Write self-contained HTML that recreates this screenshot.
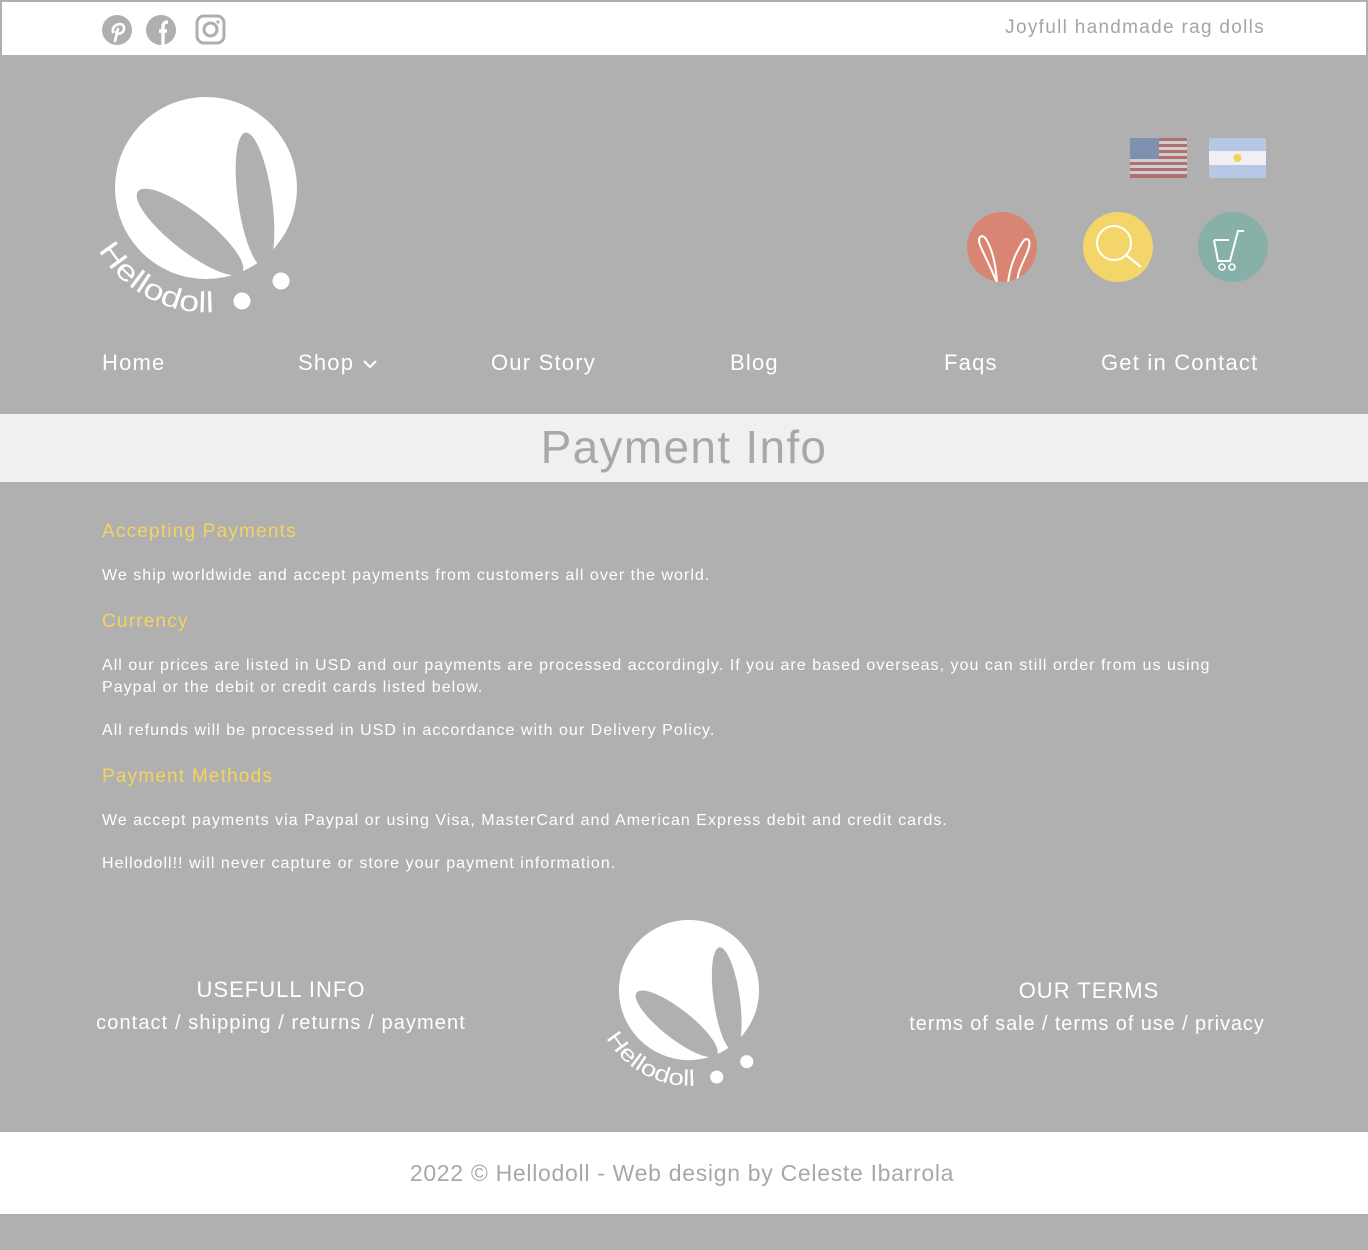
<!DOCTYPE html>
<html><head><meta charset="utf-8">
<style>
*{margin:0;padding:0;box-sizing:border-box}
body{width:1368px;height:1250px;background:#b0b0b0;font-family:"Liberation Sans",sans-serif;position:relative;overflow:hidden}
.a{position:absolute;white-space:nowrap}
.top{left:0;top:0;width:1368px;height:55px;background:#fff;border:2px solid #b0b0b0;border-bottom:none}
.nav{color:#fff;font-size:22px;top:350px;letter-spacing:1.2px}
.band{left:0;top:414px;width:1368px;height:68px;background:#f0f0f0}
.h{color:#f4d35e;font-size:19px;left:102px;letter-spacing:1.2px}
.p{color:#fff;font-size:16px;left:102px;line-height:22px;letter-spacing:1.03px}
.foot{left:0;top:1132px;width:1368px;height:82px;background:#fff}
</style></head><body>
<div class="a top"></div>
<svg class="a" style="left:100px;top:13px" width="130" height="34" viewBox="0 0 130 34">
 <circle cx="17" cy="17" r="15" fill="#afafaf"/>
 <path d="M15 28 L18 16 M13 19 C11 11 24 8 24 15 C24 21 17 22 16 19" stroke="#fff" stroke-width="2.6" fill="none" stroke-linecap="round"/>
 <circle cx="61" cy="17" r="15" fill="#afafaf"/>
 <path d="M63 32 V18 H67 M59 18 H67 M63 32 V14 C63 10 65 9 68 9" stroke="#fff" stroke-width="3.4" fill="none"/>
 <rect x="97" y="3" width="27" height="27" rx="7" fill="none" stroke="#afafaf" stroke-width="3"/>
 <circle cx="110.5" cy="16.5" r="6.5" fill="none" stroke="#afafaf" stroke-width="3"/>
 <circle cx="118" cy="9" r="1.6" fill="#afafaf"/>
</svg>
<div class="a" style="right:103px;top:17px;font-size:19px;color:#a5a5a5;letter-spacing:1.3px">Joyfull handmade rag dolls</div>

<svg width="0" height="0" style="position:absolute">
 <defs>
  <g id="logo">
   <circle cx="0" cy="0" r="91" fill="#fff"/>
   <ellipse cx="49" cy="12" rx="17" ry="68" transform="rotate(-8 49 12)" fill="#b0b0b0"/>
   <ellipse cx="-16" cy="44" rx="66" ry="19" transform="rotate(38 -16 44)" fill="#b0b0b0"/>
   <path id="arc" d="M -107.5 62 A 124 124 0 0 0 14 123.5" fill="none"/>
   <text font-family="Liberation Sans,sans-serif" font-size="29" fill="#fff" textLength="138" lengthAdjust="spacingAndGlyphs"><textPath href="#arc">Hellodoll</textPath></text>
   <circle cx="36" cy="113" r="8.5" fill="#fff"/>
   <circle cx="75" cy="93" r="8.5" fill="#fff"/>
  </g>
 </defs>
</svg>
<svg class="a" style="left:0;top:0" width="400" height="340"><use href="#logo" transform="translate(206 188)"/></svg>

<svg class="a" style="left:1129px;top:137px" width="138" height="42" viewBox="0 0 138 42">
 <rect x="1" y="1" width="57" height="40" rx="2" fill="#cfcfcf"/>
 <g fill="#b07070"><rect x="1" y="1" width="57" height="3"/><rect x="1" y="7" width="57" height="3"/><rect x="1" y="13" width="57" height="3"/><rect x="1" y="19" width="57" height="3"/><rect x="1" y="25" width="57" height="3"/><rect x="1" y="31" width="57" height="3"/><rect x="1" y="37" width="57" height="4"/></g>
 <rect x="1" y="1" width="29" height="21" fill="#7f8fae"/>
 <rect x="80" y="1" width="57" height="40" rx="2" fill="#b6c8e6"/>
 <rect x="80" y="14" width="57" height="14" fill="#f0f0f0"/>
 <circle cx="108.5" cy="21" r="4" fill="#f3d35e"/>
</svg>

<svg class="a" style="left:960px;top:205px" width="320" height="85" viewBox="0 0 320 85">
 <defs><clipPath id="c1"><circle cx="42" cy="42" r="35"/></clipPath></defs>
 <circle cx="42" cy="42" r="35" fill="#d98573"/>
 <g clip-path="url(#c1)" stroke="#fff" stroke-width="2" fill="none">
  <path d="M37 78 C30 60 24 50 20 40 C17 32 22 28 26 34 C32 44 36 60 37 78"/>
  <path d="M48 78 C50 60 56 48 62 38 C66 31 71 34 69 42 C66 54 58 62 57 78"/>
 </g>
 <circle cx="158" cy="42" r="35" fill="#f4d56a"/>
 <circle cx="154" cy="38" r="17" fill="none" stroke="#fff" stroke-width="2"/>
 <path d="M166 50 L181 62" stroke="#fff" stroke-width="2.2"/>
 <circle cx="273" cy="42" r="35" fill="#87b0a9"/>
 <path d="M254 35 H269 M254 35 L258 56 H270 L278 26 H284" stroke="#fff" stroke-width="2" fill="none"/>
 <circle cx="262" cy="62" r="3" fill="none" stroke="#fff" stroke-width="1.6"/>
 <circle cx="272" cy="62" r="3" fill="none" stroke="#fff" stroke-width="1.6"/>
</svg>

<div class="a nav" style="left:102px">Home</div>
<div class="a nav" style="left:298px">Shop <svg width="16" height="12" viewBox="0 0 16 12" style="vertical-align:middle"><path d="M2 3 L8 9 L14 3" stroke="#fff" stroke-width="2.2" fill="none"/></svg></div>
<div class="a nav" style="left:491px">Our Story</div>
<div class="a nav" style="left:730px">Blog</div>
<div class="a nav" style="left:944px">Faqs</div>
<div class="a nav" style="left:1101px">Get in Contact</div>

<div class="a band"></div>
<div class="a" style="left:0;width:1368px;text-align:center;top:420px;font-size:46px;color:#a8a8a8;letter-spacing:1.3px">Payment Info</div>

<div class="a h" style="top:521px">Accepting Payments</div>
<div class="a p" style="top:565px">We ship worldwide and accept payments from customers all over the world.</div>
<div class="a h" style="top:611px">Currency</div>
<div class="a p" style="top:655px">All our prices are listed in USD and our payments are processed accordingly. If you are based overseas, you can still order from us using<br>Paypal or the debit or credit cards listed below.</div>
<div class="a p" style="top:720px">All refunds will be processed in USD in accordance with our Delivery Policy.</div>
<div class="a h" style="top:766px">Payment Methods</div>
<div class="a p" style="top:810px">We accept payments via Paypal or using Visa, MasterCard and American Express debit and credit cards.</div>
<div class="a p" style="top:853px">Hellodoll!! will never capture or store your payment information.</div>

<div class="a" style="left:81px;width:400px;text-align:center;top:977px;color:#fff;font-size:22px;letter-spacing:1px">USEFULL INFO</div>
<div class="a" style="left:81px;width:400px;text-align:center;top:1012px;color:#fff;font-size:20px;letter-spacing:1.1px">contact / shipping / returns / payment</div>
<svg class="a" style="left:560px;top:900px" width="260" height="210"><use href="#logo" transform="translate(129 90) scale(0.77)"/></svg>
<div class="a" style="left:889px;width:400px;text-align:center;top:978px;color:#fff;font-size:22px;letter-spacing:1px">OUR TERMS</div>
<div class="a" style="left:887px;width:400px;text-align:center;top:1013px;color:#fff;font-size:20px;letter-spacing:0.9px">terms of sale / terms of use / privacy</div>

<div class="a foot"></div>
<div class="a" style="left:0;width:1364px;text-align:center;top:1160px;font-size:23px;color:#a8a8a8;letter-spacing:0.7px">2022 © Hellodoll - Web design by Celeste Ibarrola</div>
</body></html>
